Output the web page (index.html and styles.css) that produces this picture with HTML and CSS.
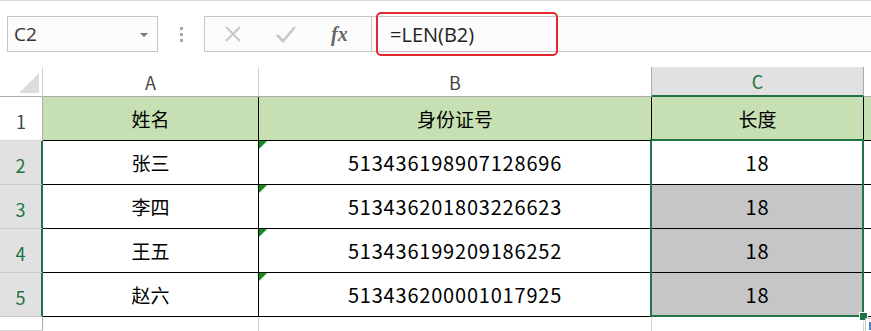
FILE: index.html
```html
<!DOCTYPE html>
<html lang="zh-CN">
<head>
  <meta charset="UTF-8">
  <title>身份证号长度</title>
  <link rel="stylesheet" href="styles.css">
</head>
<body>
  <!-- 编辑栏 -->
  <div class="toolbar">
    <div class="name-box">
      <span>C2</span>
      <span class="caret"></span>
    </div>
    <div class="grip"><i></i><i></i><i></i></div>
    <div class="fx-buttons">
      <svg class="btn-icon" width="20" height="20" viewBox="0 0 20 20">
        <path d="M3 3 L17 17 M17 3 L3 17" stroke="#c8c8c8" stroke-width="2" fill="none"/>
      </svg>
      <svg class="btn-icon" width="22" height="20" viewBox="0 0 22 20">
        <path d="M2 11 L8 17 L20 3" stroke="#c8c8c8" stroke-width="2.6" fill="none"/>
      </svg>
      <span class="fx">fx</span>
    </div>
    <div class="formula-bar">=LEN(B2)</div>
    <div class="formula-mark"></div>
  </div>

  <!-- 工作表 -->
  <div class="sheet">
    <div class="corner"><span class="corner-tri"></span></div>
    <div class="col-head">A</div>
    <div class="col-head">B</div>
    <div class="col-head sel">C</div>
    <div class="col-head blank"></div>

    <div class="row-head">1</div>
    <div class="cell title">姓名</div>
    <div class="cell title">身份证号</div>
    <div class="cell title">长度</div>
    <div class="cell title tail"></div>

    <div class="row-head sel">2</div>
    <div class="cell">张三</div>
    <div class="cell num flag">513436198907128696</div>
    <div class="cell num">18</div>
    <div class="cell tail"></div>

    <div class="row-head sel">3</div>
    <div class="cell">李四</div>
    <div class="cell num flag">513436201803226623</div>
    <div class="cell num picked">18</div>
    <div class="cell tail"></div>

    <div class="row-head sel">4</div>
    <div class="cell">王五</div>
    <div class="cell num flag">513436199209186252</div>
    <div class="cell num picked">18</div>
    <div class="cell tail"></div>

    <div class="row-head sel">5</div>
    <div class="cell">赵六</div>
    <div class="cell num flag">513436200001017925</div>
    <div class="cell num picked">18</div>
    <div class="cell tail"></div>

    <div class="row-head"></div>
    <div class="cell empty"></div>
    <div class="cell empty"></div>
    <div class="cell empty"></div>
    <div class="cell empty tail"></div>

    <!-- 选区 C2:C5 -->
    <div class="selection"><span class="fill-handle"></span></div>
    <div class="quick-btn"><span></span></div>
  </div>
</body>
</html>
```

FILE: styles.css
```css
:root {
  --green: #217346;
  --head-bg: #e1e1e1;
  --grid: #d4d4d4;
  --head-line: #ababab;
  --title-bg: #c6e0b4;
}
* {
  box-sizing: border-box;
  margin: 0;
  padding: 0;
}
body {
  width: 871px;
  height: 331px;
  overflow: hidden;
  background: #fff;
  font-family: "Noto Sans CJK SC", "Noto Sans", sans-serif;
}

/* 编辑栏 */
.toolbar {
  position: relative;
  height: 67px;
  border-top: 1px solid #d8d8d8;
  padding-top: 15px;
  display: flex;
  align-items: flex-start;
}
.name-box {
  margin-left: 7px;
  width: 151px;
  height: 36px;
  border: 1px solid #c6c6c6;
  background: #fcfcfc;
  display: flex;
  align-items: center;
  justify-content: space-between;
  padding: 0 9px 0 6px;
  font-family: "Open Sans", "Noto Sans", sans-serif;
  font-size: 19px;
  color: #333;
}
.caret {
  width: 0;
  height: 0;
  border-left: 4px solid transparent;
  border-right: 4px solid transparent;
  border-top: 4px solid #777;
  margin-top: 2px;
}
.grip {
  width: 46px;
  height: 36px;
  display: flex;
  flex-direction: column;
  align-items: center;
  justify-content: center;
  gap: 3px;
}
.grip i {
  display: block;
  width: 3px;
  height: 3px;
  background: #a8a8a8;
}
.fx-buttons {
  width: 168px;
  height: 36px;
  border: 1px solid #c6c6c6;
  background: #fcfcfc;
  display: flex;
  align-items: center;
  padding-left: 18px;
  gap: 32px;
}
.fx {
  font-family: "Liberation Serif", "DejaVu Serif", serif;
  font-style: italic;
  font-weight: bold;
  font-size: 20px;
  color: #666;
  margin-left: 2px;
}
.formula-bar {
  flex: 1;
  height: 36px;
  border-top: 1px solid #c6c6c6;
  border-bottom: 1px solid #c6c6c6;
  background: #fcfcfc;
  padding-left: 18px;
  display: flex;
  align-items: center;
  font-family: "Open Sans", "Noto Sans", sans-serif;
  font-size: 20px;
  color: #222;
}
.formula-mark {
  position: absolute;
  left: 376px;
  top: 11px;
  width: 182px;
  height: 44px;
  border: 2px solid #e5282d;
  border-radius: 5px;
}

/* 工作表网格 */
.sheet {
  position: relative;
  display: grid;
  grid-template-columns: 43px 216px 393px 212px 1fr;
  grid-template-rows: 30px repeat(5, 44px) 1fr;
  height: 264px;
}
.corner {
  position: relative;
  border-right: 1px solid var(--grid);
  border-bottom: 1px solid var(--head-line);
}
.corner-tri {
  position: absolute;
  right: 3px;
  bottom: 3px;
  width: 0;
  height: 0;
  border-left: 20px solid transparent;
  border-bottom: 20px solid #dcdcdc;
}
.col-head {
  border-right: 1px solid var(--grid);
  border-bottom: 1px solid var(--head-line);
  display: flex;
  align-items: center;
  justify-content: center;
  font-size: 18px;
  color: #444;
}
.col-head.sel {
  background: var(--head-bg);
  color: var(--green);
  border-right-color: var(--head-line);
  border-bottom: 2px solid var(--green);
  box-shadow: -1px 0 0 var(--head-line);
}
.col-head.blank {
  border-right: none;
}
.row-head {
  border-right: 1px solid var(--head-line);
  border-bottom: 1px solid var(--grid);
  display: flex;
  align-items: center;
  justify-content: center;
  padding-top: 4px;
  font-size: 18px;
  color: #444;
}
.row-head.sel {
  background: var(--head-bg);
  color: var(--green);
  border-right: 2px solid var(--green);
  border-bottom-color: #c8c8c8;
}
.cell {
  position: relative;
  border-right: 1px solid #000;
  border-bottom: 1px solid #000;
  display: flex;
  align-items: center;
  justify-content: center;
  font-size: 19px;
  color: #000;
}
.cell.title {
  background: var(--title-bg);
}
.cell.tail {
  border-right: none;
}
.cell.num {
  font-size: 20px;
  letter-spacing: 0.8px;
}
.cell.picked {
  background: #c6c6c6;
}
.cell.flag::before {
  content: "";
  position: absolute;
  top: 0;
  left: 0;
  border-top: 8px solid #188a18;
  border-right: 8px solid transparent;
}
.cell.empty {
  border-right-color: var(--grid);
  border-bottom: none;
}

/* 选区框与填充柄 */
.selection {
  position: absolute;
  left: 650px;
  top: 72px;
  width: 214px;
  height: 178px;
  border: 2px solid var(--green);
}
.fill-handle {
  position: absolute;
  right: -6px;
  bottom: -6px;
  width: 9px;
  height: 9px;
  background: var(--green);
  border: 1px solid #fff;
}
.quick-btn {
  position: absolute;
  left: 865px;
  top: 251px;
  width: 14px;
  height: 16px;
  border: 1px solid #c6c6c6;
  background: #fff;
  padding: 3px;
}
.quick-btn span {
  display: block;
  width: 4px;
  height: 8px;
  background: #4a86c8;
}
```
